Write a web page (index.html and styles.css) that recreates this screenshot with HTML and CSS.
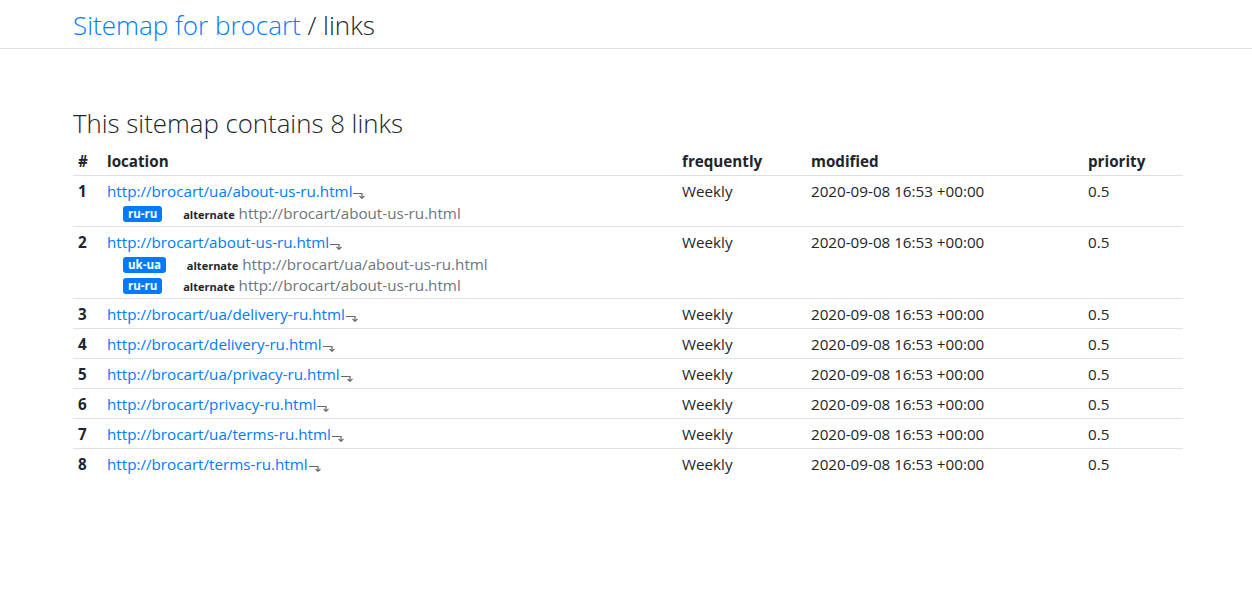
FILE: index.html
```html
<!DOCTYPE html>
<html lang="en">
<head>
  <meta charset="UTF-8" />
  <title>Sitemap for brocart / links</title>
  <link rel="stylesheet" href="styles.css">
</head>
<body>
  <!-- Top bar -->
  <header class="topbar">
    <div class="container">
      <h1 class="site-title"><a href="#">Sitemap for brocart</a> / links</h1>
    </div>
  </header>

  <main class="container">
    <h2 class="page-title">This sitemap contains 8 links</h2>

    <table class="links">
      <thead>
        <tr>
          <th class="col-num">#</th>
          <th class="col-loc">location</th>
          <th class="col-freq">frequently</th>
          <th class="col-mod">modified</th>
          <th class="col-prio">priority</th>
        </tr>
      </thead>
      <tbody>
        <tr>
          <th>1</th>
          <td>
            <a href="#">http://brocart/ua/about-us-ru.html</a><svg class="go" width="12" height="7" viewBox="0 0 12 7"><path d="M0 1.5H9V6M6.5 3.8L9 6.3L11.5 3.8"/></svg>
            <div class="alt"><span class="badge">ru-ru</span> <small>alternate</small> http://brocart/about-us-ru.html</div>
          </td>
          <td>Weekly</td>
          <td>2020-09-08 16:53 +00:00</td>
          <td>0.5</td>
        </tr>
        <tr>
          <th>2</th>
          <td>
            <a href="#">http://brocart/about-us-ru.html</a><svg class="go" width="12" height="7" viewBox="0 0 12 7"><path d="M0 1.5H9V6M6.5 3.8L9 6.3L11.5 3.8"/></svg>
            <div class="alt"><span class="badge">uk-ua</span> <small>alternate</small> http://brocart/ua/about-us-ru.html</div>
            <div class="alt"><span class="badge">ru-ru</span> <small>alternate</small> http://brocart/about-us-ru.html</div>
          </td>
          <td>Weekly</td>
          <td>2020-09-08 16:53 +00:00</td>
          <td>0.5</td>
        </tr>
        <tr>
          <th>3</th>
          <td><a href="#">http://brocart/ua/delivery-ru.html</a><svg class="go" width="12" height="7" viewBox="0 0 12 7"><path d="M0 1.5H9V6M6.5 3.8L9 6.3L11.5 3.8"/></svg></td>
          <td>Weekly</td>
          <td>2020-09-08 16:53 +00:00</td>
          <td>0.5</td>
        </tr>
        <tr>
          <th>4</th>
          <td><a href="#">http://brocart/delivery-ru.html</a><svg class="go" width="12" height="7" viewBox="0 0 12 7"><path d="M0 1.5H9V6M6.5 3.8L9 6.3L11.5 3.8"/></svg></td>
          <td>Weekly</td>
          <td>2020-09-08 16:53 +00:00</td>
          <td>0.5</td>
        </tr>
        <tr>
          <th>5</th>
          <td><a href="#">http://brocart/ua/privacy-ru.html</a><svg class="go" width="12" height="7" viewBox="0 0 12 7"><path d="M0 1.5H9V6M6.5 3.8L9 6.3L11.5 3.8"/></svg></td>
          <td>Weekly</td>
          <td>2020-09-08 16:53 +00:00</td>
          <td>0.5</td>
        </tr>
        <tr>
          <th>6</th>
          <td><a href="#">http://brocart/privacy-ru.html</a><svg class="go" width="12" height="7" viewBox="0 0 12 7"><path d="M0 1.5H9V6M6.5 3.8L9 6.3L11.5 3.8"/></svg></td>
          <td>Weekly</td>
          <td>2020-09-08 16:53 +00:00</td>
          <td>0.5</td>
        </tr>
        <tr>
          <th>7</th>
          <td><a href="#">http://brocart/ua/terms-ru.html</a><svg class="go" width="12" height="7" viewBox="0 0 12 7"><path d="M0 1.5H9V6M6.5 3.8L9 6.3L11.5 3.8"/></svg></td>
          <td>Weekly</td>
          <td>2020-09-08 16:53 +00:00</td>
          <td>0.5</td>
        </tr>
        <tr>
          <th>8</th>
          <td><a href="#">http://brocart/terms-ru.html</a><svg class="go" width="12" height="7" viewBox="0 0 12 7"><path d="M0 1.5H9V6M6.5 3.8L9 6.3L11.5 3.8"/></svg></td>
          <td>Weekly</td>
          <td>2020-09-08 16:53 +00:00</td>
          <td>0.5</td>
        </tr>
      </tbody>
    </table>
  </main>
</body>
</html>
```

FILE: styles.css
```css
body {
  margin: 0;
  font-family: "Open Sans", "Noto Sans", sans-serif;
  font-size: 15.2px;
  line-height: 24px;
  color: #212529;
  background: #fff;
}
a { color: #007bff; text-decoration: none; }

.container { width: 1110px; margin: 0 auto; padding-left: 4px; }

/* Top bar */
.topbar { border-bottom: 1px solid #dee2e6; height: 48px; }
.site-title {
  margin: 0;
  font-size: 26px;
  font-weight: 300;
  line-height: 50px;
  color: #212529;
}

/* Heading */
main { padding-top: 58px; }
.page-title {
  margin: 0 0 7px 0;
  font-size: 25.8px;
  font-weight: 300;
  line-height: 32px;
}

/* Table */
.links { width: 1110px; border-collapse: collapse; table-layout: fixed; }
.links th, .links td {
  padding: 3px 5px 2px 5px;
  text-align: left;
  vertical-align: top;
}
.links tbody th, .links tbody td { border-top: 1px solid #dee2e6; }
.links th { font-weight: 700; }
.col-num { width: 19px; }
.col-loc { width: 565px; }
.col-freq { width: 119px; }
.col-mod { width: 267px; }
.col-prio { width: 90px; }

.go { vertical-align: -2px; margin-left: 1px; }
.go path { fill: none; stroke: #666; stroke-width: 1.2; }

.alt { line-height: 21px; height: 21px; padding-left: 16px; color: #6c757d; }
.alt small { font-size: 11px; line-height: 1; font-weight: 700; color: #212529; }
.badge {
  display: inline-block;
  background: #007bff;
  color: #fff;
  font-size: 11.5px;
  font-weight: 700;
  line-height: 16px;
  padding: 0 5px;
  border-radius: 3px;
  margin-right: 17px;
  vertical-align: 1px;
}
```
